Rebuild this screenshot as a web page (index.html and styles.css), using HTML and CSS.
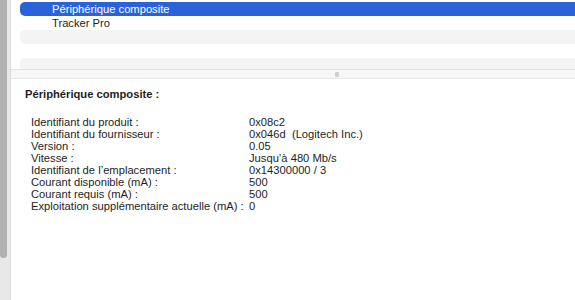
FILE: index.html
```html
<!DOCTYPE html>
<html lang="fr">
<head>
    <meta charset="UTF-8">
    <title>Informations système</title>
    <link rel="stylesheet" href="styles.css">
</head>
<body>
    <div class="sidebar">
        <div class="scroll-thumb"></div>
    </div>

    <div class="main">
        <div class="device-list">
            <div class="row selected">Périphérique composite</div>
            <div class="row">Tracker Pro</div>
            <div class="row stripe"></div>
            <div class="row"></div>
            <div class="row stripe"></div>
        </div>

        <div class="splitter">
            <div class="grip"></div>
        </div>

        <div class="details">
            <h2>Périphérique composite :</h2>
            <div class="props">
                <span>Identifiant du produit :</span><span>0x08c2</span>
                <span>Identifiant du fournisseur :</span><span>0x046d&nbsp; (Logitech Inc.)</span>
                <span>Version :</span><span>0.05</span>
                <span>Vitesse :</span><span>Jusqu’à 480 Mb/s</span>
                <span>Identifiant de l’emplacement :</span><span>0x14300000 / 3</span>
                <span>Courant disponible (mA) :</span><span>500</span>
                <span>Courant requis (mA) :</span><span>500</span>
                <span>Exploitation supplémentaire actuelle (mA) :</span><span>0</span>
            </div>
        </div>
    </div>
</body>
</html>
```

FILE: styles.css
```css
body {
    margin: 0;
    height: 300px;
    display: flex;
    overflow: hidden;
    font-family: "Liberation Sans", Arial, sans-serif;
    font-size: 11.2px;
    color: #1e1e1e;
    background: #fff;
}
.sidebar {
    width: 11px;
    flex: none;
    background: #e8e8e8;
    border-right: 1px solid #dcdcdc;
    box-sizing: border-box;
}
.scroll-thumb {
    width: 7px;
    height: 258px;
    background: #b1b1b1;
    border-radius: 0 0 4px 4px;
}
.main {
    flex: 1;
    display: flex;
    flex-direction: column;
}
.device-list {
    height: 69px;
    padding-top: 2px;
    box-sizing: border-box;
    overflow: hidden;
}
.row {
    height: 14px;
    line-height: 14px;
    margin-left: 9px;
    padding-left: 32px;
    border-radius: 5px 0 0 5px;
}
.row.selected {
    background: #2a63d9;
    color: #fff;
}
.row.stripe {
    background: #f4f4f4;
}
.splitter {
    height: 8px;
    background: #f7f7f7;
    border-top: 1px solid #e2e2e2;
    border-bottom: 1px solid #e6e6e6;
    display: flex;
    justify-content: center;
    align-items: center;
}
.grip {
    width: 4px;
    height: 5px;
    margin-left: 88px;
    background: #cfcfcf;
    border-radius: 1px;
}
.details {
    padding: 8px 0 0 14px;
}
.details h2 {
    margin: 0 0 15px;
    font-size: 11.2px;
    font-weight: bold;
    line-height: 14px;
}
.props {
    display: grid;
    grid-template-columns: 218px auto;
    line-height: 12px;
    padding-left: 6px;
}
```
